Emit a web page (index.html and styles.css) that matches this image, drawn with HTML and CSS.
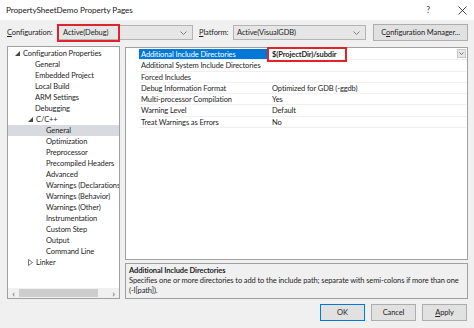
FILE: index.html
```html
<!DOCTYPE html>
<html lang="en">
<head>
  <meta charset="UTF-8">
  <title>PropertySheetDemo Property Pages</title>
  <link rel="stylesheet" href="styles.css">
</head>
<body>
  <div class="dialog">
    <div class="titlebar">
      <span class="title">PropertySheetDemo Property Pages</span>
      <span class="title-help">?</span>
      <svg class="title-close" width="9" height="9" viewBox="0 0 9 9"><path d="M0.5 0.5 L8.5 8.5 M8.5 0.5 L0.5 8.5" stroke="#333" stroke-width="0.9" fill="none"/></svg>
    </div>

    <div class="config-row">
      <span class="label"><u>C</u>onfiguration:</span>
      <div class="combo combo-config">
        <span>Active(Debug)</span>
        <svg class="chev" width="7" height="4" viewBox="0 0 7 4"><path d="M0.5 0.5 L3.5 3.5 L6.5 0.5" stroke="#666" fill="none" stroke-width="0.8"/></svg>
      </div>
      <span class="label label-platform"><u>P</u>latform:</span>
      <div class="combo combo-platform">
        <span>Active(VisualGDB)</span>
        <svg class="chev" width="7" height="4" viewBox="0 0 7 4"><path d="M0.5 0.5 L3.5 3.5 L6.5 0.5" stroke="#666" fill="none" stroke-width="0.8"/></svg>
      </div>
      <button class="btn btn-manager">C<u>o</u>nfiguration Manager...</button>
      <div class="mark mark-config"></div>
    </div>

    <div class="main">
      <div class="tree">
        <div class="tree-list">
          <div class="node lvl0"><svg class="exp" width="5" height="5" viewBox="0 0 5 5"><path d="M5 0 L5 5 L0 5 Z" fill="#444"/></svg>Configuration Properties</div>
          <div class="node lvl1">General</div>
          <div class="node lvl1">Embedded Project</div>
          <div class="node lvl1">Local Build</div>
          <div class="node lvl1">ARM Settings</div>
          <div class="node lvl1">Debugging</div>
          <div class="node lvl1 has-exp"><svg class="exp" width="5" height="5" viewBox="0 0 5 5"><path d="M5 0 L5 5 L0 5 Z" fill="#444"/></svg>C/C++</div>
          <div class="node lvl2 selected">General</div>
          <div class="node lvl2">Optimization</div>
          <div class="node lvl2">Preprocessor</div>
          <div class="node lvl2">Precompiled Headers</div>
          <div class="node lvl2">Advanced</div>
          <div class="node lvl2">Warnings (Declarations)</div>
          <div class="node lvl2">Warnings (Behavior)</div>
          <div class="node lvl2">Warnings (Other)</div>
          <div class="node lvl2">Instrumentation</div>
          <div class="node lvl2">Custom Step</div>
          <div class="node lvl2">Output</div>
          <div class="node lvl2">Command Line</div>
          <div class="node lvl1 has-exp"><svg class="exp" width="5" height="7" viewBox="0 0 5 7"><path d="M0.5 0.5 L4.5 3.5 L0.5 6.5 Z" fill="none" stroke="#555" stroke-width="0.8"/></svg>Linker</div>
        </div>
        <div class="hscroll">
          <span class="arrow">&lsaquo;</span>
          <div class="thumb"></div>
          <span class="arrow">&rsaquo;</span>
        </div>
      </div>

      <div class="right">
        <div class="grid">
          <div class="row selected">
            <div class="name">Additional Include Directories</div>
            <div class="value bold">$(ProjectDir)/subdir</div>
            <div class="drop"><svg width="5" height="3" viewBox="0 0 5 3"><path d="M0.5 0.5 L2.5 2.5 L4.5 0.5" stroke="#555" fill="none" stroke-width="0.8"/></svg></div>
          </div>
          <div class="row">
            <div class="name">Additional System Include Directories</div>
            <div class="value"></div>
          </div>
          <div class="row">
            <div class="name">Forced Includes</div>
            <div class="value"></div>
          </div>
          <div class="row">
            <div class="name">Debug Information Format</div>
            <div class="value">Optimized for GDB (-ggdb)</div>
          </div>
          <div class="row">
            <div class="name">Multi-processor Compilation</div>
            <div class="value">Yes</div>
          </div>
          <div class="row">
            <div class="name">Warning Level</div>
            <div class="value">Default</div>
          </div>
          <div class="row">
            <div class="name">Treat Warnings as Errors</div>
            <div class="value">No</div>
          </div>
          <div class="mark mark-value"></div>
        </div>
        <div class="desc">
          <div class="desc-title">Additional Include Directories</div>
          <div class="desc-text">Specifies one or more directories to add to the include path; separate with semi-colons if more than one (-I[path]).</div>
        </div>
      </div>
    </div>

    <div class="buttons">
      <button class="btn btn-ok">OK</button>
      <button class="btn">Cancel</button>
      <button class="btn"><u>A</u>pply</button>
    </div>
  </div>
</body>
</html>
```

FILE: styles.css
```css
body {
  margin: 0;
  font-family: Lato, "Noto Sans", sans-serif;
  font-size: 7.5px;
  letter-spacing: -0.1px;
  color: #1e1e1e;
  background: #f0f0f0;
}
.dialog {
  width: 474px;
  height: 328px;
  background: #f0f0f0;
  overflow: hidden;
}
.titlebar {
  height: 20px;
  background: #fff;
  display: flex;
  align-items: center;
  padding: 0 6px;
}
.title {
  flex: 1;
  font-size: 8.2px;
  color: #222;
}
.title-help {
  font-size: 8.6px;
  margin-right: 28px;
  color: #333;
}
.title-close {
  margin-right: 1px;
}
.config-row {
  position: relative;
  display: flex;
  align-items: center;
  height: 17px;
  margin-top: 4px;
  padding-left: 7px;
  white-space: nowrap;
}
.label {
  width: 50px;
}
.label-platform {
  width: 34px;
  margin-left: 6px;
}
.combo {
  height: 15px;
  border: 1px solid #b4b4b4;
  background: #e6e6e6;
  display: flex;
  align-items: center;
  justify-content: space-between;
  padding: 0 5px;
  box-sizing: border-box;
}
.combo-config {
  width: 136px;
  padding-left: 5px;
}
.combo-platform {
  width: 133px;
  padding-left: 3px;
}
.btn {
  font-family: inherit;
  font-size: 7.5px;
  letter-spacing: -0.1px;
  color: #1e1e1e;
  background: #e1e1e1;
  border: 1px solid #adadad;
  height: 17px;
  padding: 0;
  white-space: nowrap;
}
.btn-manager {
  width: 95px;
  margin-left: 7px;
}
.mark {
  position: absolute;
  border: 2px solid #e0242c;
  box-sizing: border-box;
}
.mark-config {
  left: 57px;
  top: 0;
  width: 63px;
  height: 18px;
}
.main {
  display: flex;
  margin-top: 5px;
  padding-left: 7px;
  height: 253px;
}
.tree {
  width: 113px;
  background: #fff;
  border: 1px solid #a0a0a0;
  box-sizing: border-box;
  display: flex;
  flex-direction: column;
}
.tree-list {
  flex: 1;
  padding-top: 1px;
  overflow: hidden;
}
.node {
  height: 11px;
  line-height: 11px;
  white-space: nowrap;
  display: flex;
  align-items: center;
}
.lvl0 {
  padding-left: 7px;
}
.lvl0 .exp {
  margin-right: 3px;
}
.lvl1 {
  padding-left: 27px;
}
.lvl1.has-exp {
  padding-left: 20px;
}
.lvl1 .exp {
  margin-right: 3px;
}
.lvl2 {
  padding-left: 38px;
}
.node.selected {
  background: #d9d9e0;
}
.hscroll {
  height: 10px;
  display: flex;
  align-items: center;
  background: #f0f0f0;
}
.arrow {
  width: 11px;
  text-align: center;
  font-size: 10px;
  line-height: 10px;
  color: #606060;
}
.thumb {
  flex: 1;
  height: 8px;
  background: #cdcdcd;
  margin-right: 10px;
}
.right {
  margin-left: 5px;
  width: 343px;
  display: flex;
  flex-direction: column;
}
.grid {
  position: relative;
  height: 213px;
  margin-top: 1px;
  background: #fff;
  border: 1px solid #a0a0a0;
  box-sizing: border-box;
  padding-left: 13px;
  padding-top: 1px;
}
.row {
  display: flex;
  height: 11.3px;
  line-height: 11.3px;
  border-bottom: 1px solid #f0f0f0;
  box-sizing: border-box;
  white-space: nowrap;
}
.name {
  width: 127px;
  padding-left: 2px;
  overflow: hidden;
}
.value {
  flex: 1;
  padding-left: 4px;
}
.bold {
  font-weight: bold;
}
.row.selected .name {
  background: #0078d7;
  color: #fff;
}
.drop {
  width: 9px;
  height: 9px;
  margin: 0 1px;
  background: #e6e6e6;
  border: 1px solid #c8c8c8;
  box-sizing: border-box;
  display: flex;
  align-items: center;
  justify-content: center;
}
.mark-value {
  left: 141px;
  top: -1px;
  width: 80px;
  height: 15px;
}
.desc {
  margin-top: 3px;
  flex: 1;
  border: 1px solid #a0a0a0;
  padding: 2px 3px;
  line-height: 10px;
}
.desc-title {
  font-weight: bold;
}
.buttons {
  display: flex;
  justify-content: flex-end;
  gap: 6px;
  padding-right: 7px;
  margin-top: 5px;
}
.buttons .btn {
  width: 45px;
}
.btn-ok {
  border-color: #0078d7;
}
```
